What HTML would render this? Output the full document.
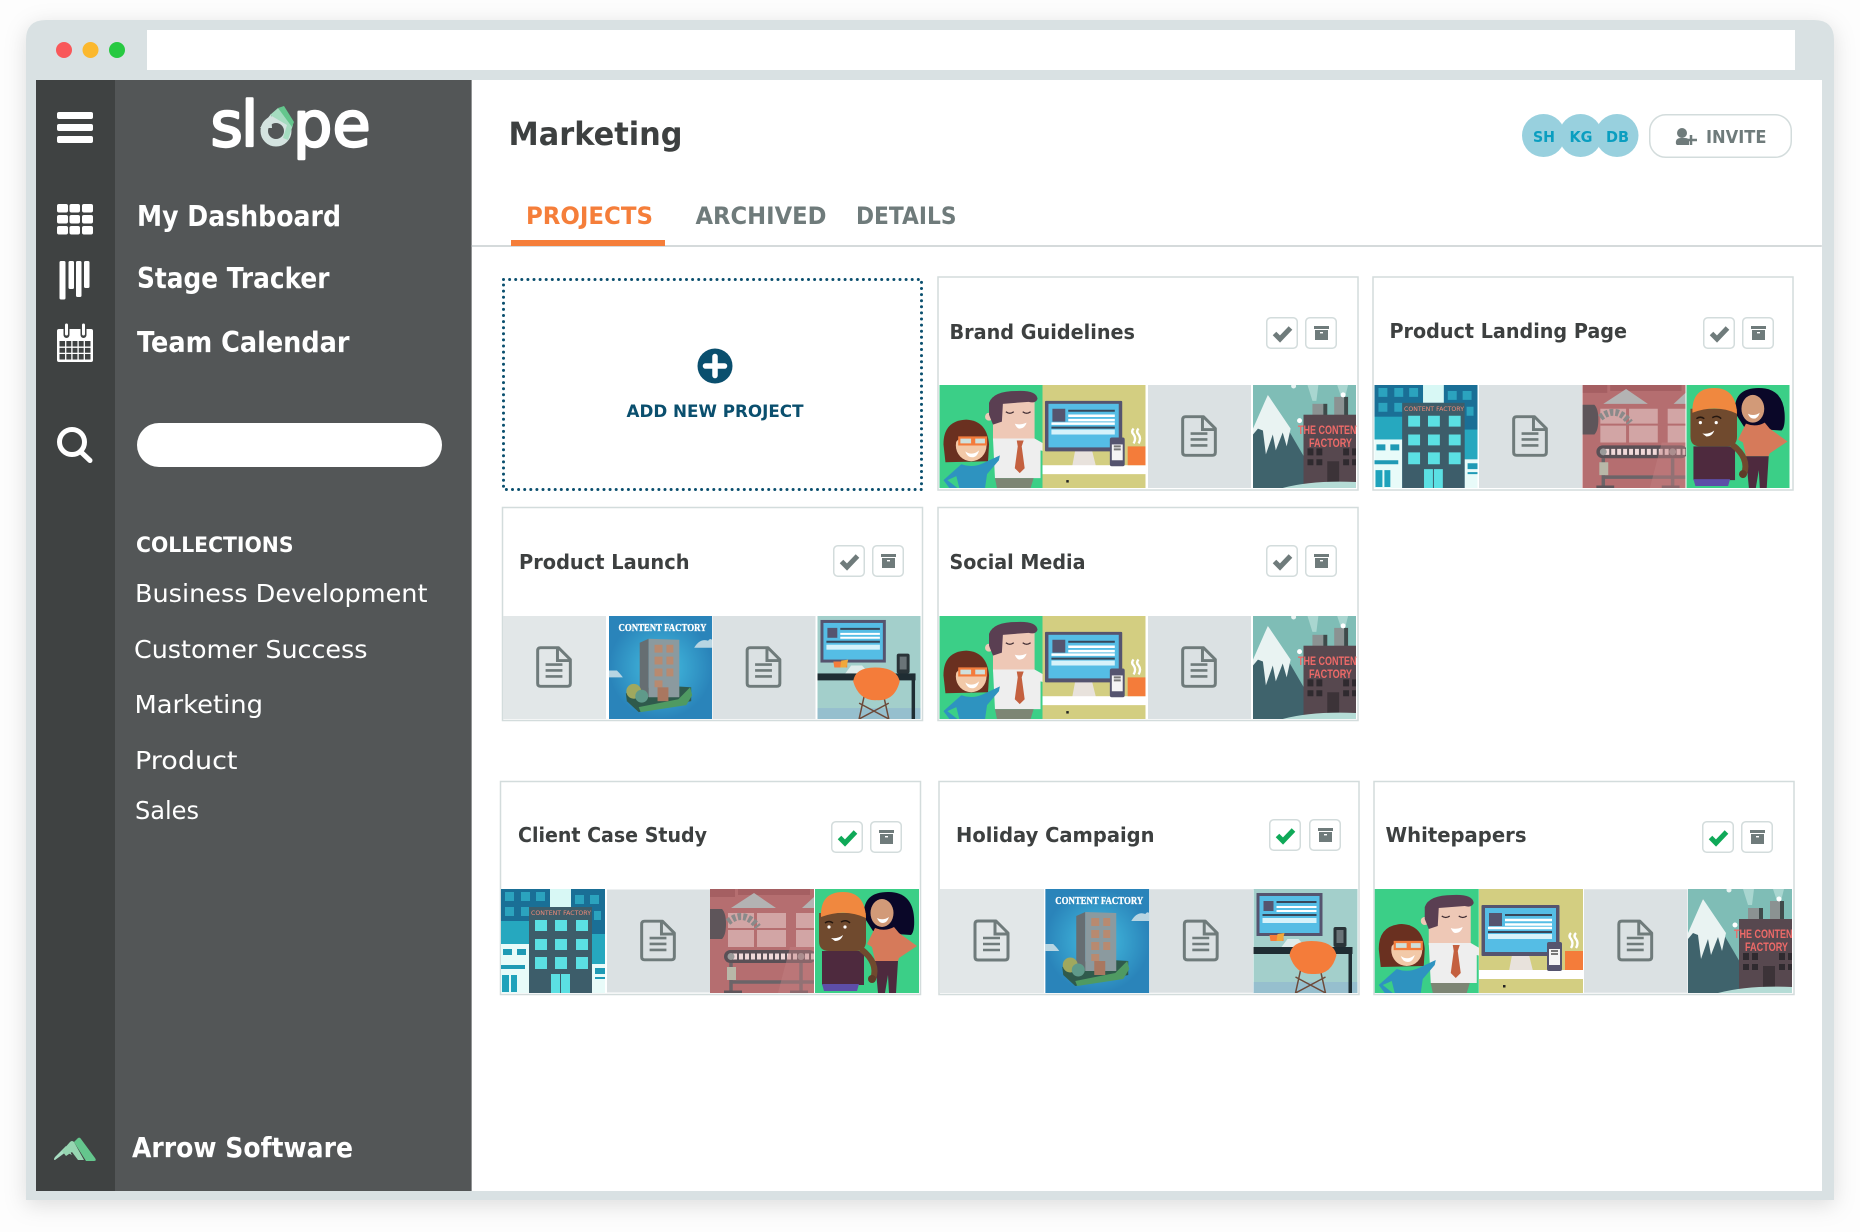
<!DOCTYPE html>
<html><head><meta charset="utf-8"><title>Slope - Marketing</title>
<style>
html,body{margin:0;padding:0;background:#fdfdfd;width:1860px;height:1232px;overflow:hidden}
svg{display:block}
text{font-family:"DejaVu Sans","Liberation Sans",sans-serif}
.b{font-weight:700}
.t{font-weight:700;font-size:20.5px;fill:#3d4040}
.w{fill:#fff}
.tab{font-weight:700;font-size:24px;fill:#6f7b7b}
.nav{font-weight:700;font-size:28.5px;fill:#fff}
.col{font-size:25px;fill:#fff}
.cf{font-family:"Liberation Sans",sans-serif;font-weight:700;fill:#ee6a68;font-size:12px}
.cb{font-family:"Liberation Serif",serif;font-weight:700;fill:#fff;font-size:10px;stroke:#fff;stroke-width:.3px}
.cc{fill:#f08a78;font-size:6.5px}
.lg{font-size:62px;fill:#fff;stroke:#fff;stroke-width:2.4px;stroke-linejoin:round}
</style></head><body>
<svg width="1860" height="1232" viewBox="0 0 1860 1232" xmlns="http://www.w3.org/2000/svg">
<defs>
<radialGradient id="bg"><stop offset="0" stop-color="#45c0e2"/><stop offset="1" stop-color="#2a84ba"/></radialGradient>

<symbol id="chk" viewBox="0 0 32 32"><rect x=".75" y=".75" width="30.5" height="30.5" rx="4" fill="#fff" stroke="#d3dcdc" stroke-width="1.5"/><path d="M8.500 16.500 L14 22 L24.500 11" fill="none" stroke="#6f7b7b" stroke-width="5"/></symbol>
<symbol id="chkg" viewBox="0 0 32 32"><rect x=".75" y=".75" width="30.5" height="30.5" rx="4" fill="#fff" stroke="#d3dcdc" stroke-width="1.5"/><path d="M8.500 16.500 L14 22 L24.500 11" fill="none" stroke="#0fa958" stroke-width="5"/></symbol>
<symbol id="arc" viewBox="0 0 32 32"><rect x=".75" y=".75" width="30.5" height="30.5" rx="4" fill="#fff" stroke="#d3dcdc" stroke-width="1.5"/><rect x="9" y="9" width="15" height="3" fill="#6f7b7b"/><rect x="10" y="13" width="13" height="10" fill="#6f7b7b"/><rect x="15" y="15" width="3" height="1.4" fill="#fff"/></symbol>

<symbol id="doc" viewBox="0 0 104 104"><rect width="104" height="104" fill="#dbe1e3"/><path d="M38 32H56L68 44V68Q68 71 65 71H38Q35 71 35 68V35Q35 32 38 32Z" fill="none" stroke="#6f7b7b" stroke-width="3" stroke-linejoin="round"/><path d="M55 32V45H68" fill="none" stroke="#6f7b7b" stroke-width="3"/><path d="M43 49H60M43 55H60M43 61H60" stroke="#6f7b7b" stroke-width="2.6"/></symbol>
<symbol id="doc2" viewBox="0 0 104 104"><rect width="104" height="104" fill="#e2e7e8"/><path d="M38 32H56L68 44V68Q68 71 65 71H38Q35 71 35 68V35Q35 32 38 32Z" fill="none" stroke="#6f7b7b" stroke-width="3" stroke-linejoin="round"/><path d="M55 32V45H68" fill="none" stroke="#6f7b7b" stroke-width="3"/><path d="M43 49H60M43 55H60M43 61H60" stroke="#6f7b7b" stroke-width="2.6"/></symbol>

<symbol id="couple" viewBox="0 0 104 104"><rect width="104" height="104" fill="#3bcf87"/>
<path d="M54 12H96V56H54Z" fill="#eec8b6"/>
<path d="M54 54H96L110 62V68L102 66V94H56Z" fill="#eeeeee"/>
<path d="M78 56H85L83 62L86 84L81 89L76 84L79 62Z" fill="#c4603f"/>
<path d="M56 94H95L92 104H58Z" fill="#7d8574"/>
<circle cx="50" cy="32" r="4" fill="#eec8b6"/>
<path d="M50 18Q54 6 78 6Q98 5 99 14Q97 19 90 17L64 19L63 37L54 40L50 30Z" fill="#5a3f52"/>
<path d="M67 27Q71 30 75 27M84 27Q88 30 92 27" fill="none" stroke="#3d2a30" stroke-width="1.200"/>
<path d="M76 39Q81 41 88 38Q86 44 81 44Q78 44 76 39Z" fill="#fff"/>
<path d="M4 60Q4 36 27 35Q48 36 50 60L49 77L6 78Z" fill="#6a3020"/>
<ellipse cx="32" cy="61" rx="15.500" ry="16" fill="#f2c9a8"/>
<path d="M17 46Q30 38 44 46L47 53L22 52L16 58Z" fill="#6a3020"/>
<path d="M20 53H33V60H20ZM35 53H47V60H35Z" fill="#cfe0dc" stroke="#f47c3c" stroke-width="2.200"/>
<path d="M26 67Q33 72 40 66Q38 73 33 73Q28 73 26 67Z" fill="#fff"/>
<path d="M22 80Q33 84 44 79L61 71L60 76L48 90L46 104H20L17 92L8 96L18 104H10L4 96Z" fill="#2e93c0"/>
</symbol>

<symbol id="monitor" viewBox="0 0 104 104"><rect width="104" height="104" fill="#d3ce81"/>
<path d="M33 66H50L54 82H30Z" fill="#e8e2dc"/>
<rect y="81" width="104" height="9" fill="#fff"/>
<rect x="2.500" y="16" width="78" height="51" rx="1" fill="#55546f"/>
<rect x="6" y="19" width="71" height="44" fill="#55bde5"/>
<rect x="10" y="24" width="13" height="13" fill="#55546f"/>
<path d="M26 26H73M9 43H73" stroke="#37475a" stroke-width="2"/>
<path d="M26 31H73M26 35.500H73M9 39H73" stroke="#fff" stroke-width="2.500"/>
<rect x="9" y="45" width="64" height="5" fill="#d6f2fa"/>
<rect x="68" y="53" width="15" height="29" rx="2" fill="#55546f"/>
<rect x="70" y="60" width="11" height="16" fill="#f4f4f4"/>
<path d="M72 62H79M72 65H79" stroke="#777" stroke-width="2"/>
<rect x="86" y="62" width="18" height="19" fill="#f47c3a"/>
<path d="M92 44Q89 47 92 50Q95 54 92 59M97 44Q94 47 97 50Q100 54 97 59" fill="none" stroke="#fff" stroke-width="2.400"/>
<rect x="24" y="96" width="2.500" height="2.500" fill="#222"/>
</symbol>

<symbol id="mountain" viewBox="0 0 104 104"><rect width="104" height="104" fill="#7fbdb6"/>
<path d="M55 0L60 16H64L66 0ZM85 0L89 12H93L96 0Z" fill="#a9d6d0"/>
<path d="M15 10L0 49V104H56V80Z" fill="#3f636c"/>
<path d="M15 10L0 44V50L5 44L10 46L13 70L20 50L23 66L30 48L34 62L38 44Z" fill="#e9f3f2"/>
<rect x="60" y="19" width="11" height="12" fill="#8b9292"/><rect x="71" y="19" width="4" height="12" fill="#3f4a4a"/>
<rect x="82" y="12" width="10" height="19" fill="#8b9292"/><rect x="92" y="12" width="4" height="19" fill="#3f4a4a"/>
<rect x="51" y="30" width="53" height="74" fill="#57484f"/>
<path d="M55 64H61V71H55ZM64 64H70V71H64ZM55 75H61V81H55ZM64 75H70V81H64ZM91 64H97V71H91ZM100 64H104V71H100ZM91 75H97V81H91ZM100 75H104V81H100Z" fill="#2f2a2f"/>
<rect x="75" y="77" width="12" height="22" fill="#3c3338"/>
<path d="M30 104Q60 96 104 98V104Z" fill="#b5dcd6"/>
<circle cx="41" cy="1" r="2.500" fill="#e9f3f2"/><circle cx="91" cy="10" r="2.500" fill="#fff"/><circle cx="47" cy="36" r="2.500" fill="#fff"/>
</symbol>

<symbol id="city" viewBox="0 0 104 104"><rect width="104" height="104" fill="#1a6f96"/>
<path d="M4 3H13V12H4ZM20 3H29V12H20ZM35 3H44V12H35ZM4 18H13V27H4ZM20 18H28V27H20ZM74 6H83V15H74ZM89 6H98V15H89ZM93 22H100V31H93Z" fill="#2ba3be"/>
<rect x="49" width="21" height="18" fill="#d8f8f5"/>
<rect y="32" width="28" height="24" fill="#26a8bf"/>
<rect x="91" y="45" width="13" height="30" fill="#26a8bf"/>
<rect y="55" width="28" height="49" fill="#e8fbf9"/>
<path d="M2 60H11V66H2ZM16 60H25V66H16ZM0 76H24V80H0Z" fill="#1f9ab5"/>
<path d="M1 86H8V103H1ZM10 86H16V103H10Z" fill="#1fa2bb"/>
<rect x="91" y="75" width="13" height="29" fill="#e8fbf9"/>
<path d="M94 79H104V85H94ZM94 88H104V90H94Z" fill="#1f9ab5"/>
<rect x="28" y="18" width="63" height="86" fill="#3d5d6a"/>
<path d="M34 31H46V42H34ZM54 31H66V42H54ZM75 31H87V42H75ZM34 50H46V61H34ZM54 50H66V61H54ZM75 50H87V61H75ZM34 68H46V80H34ZM54 68H66V80H54ZM75 68H87V80H75ZM50 85H59V104H50ZM60 85H69V104H60Z" fill="#5be0e3"/>
</symbol>

<symbol id="conveyor" viewBox="0 0 104 104"><rect width="104" height="104" fill="#b56e70"/>
<path d="M18 24H44V58H18ZM47 24H76V58H47ZM86 24H104V58H86Z" fill="#d2a5a5"/>
<path d="M18 40H104" stroke="#b56e70" stroke-width="2"/>
<path d="M0 0H25V8H0ZM28 0H100V6H28Z" fill="#a55f62"/>
<path d="M44 4L21 19H66Z" fill="#b3b3b3"/>
<path d="M92 19L104 8V19Z" fill="#b3b3b3"/>
<path d="M0 20H12Q16 24 16 35Q16 46 12 50H0Z" fill="#5e555a"/>
<path d="M18 33Q34 20 48 38" fill="none" stroke="#8a8a8a" stroke-width="7" stroke-dasharray="3.500 2"/>
<rect x="14" y="61" width="92" height="13" rx="6.500" fill="#5a5056"/>
<path d="M23 67.500H104" stroke="#f0d9d9" stroke-width="6" stroke-dasharray="4 2"/>
<circle cx="21" cy="67.500" r="3.500" fill="#9a9a9a"/><circle cx="91" cy="67.500" r="3.500" fill="#9a9a9a"/>
<path d="M21 74V102M91 74V102M22 93H104" stroke="#6b6468" stroke-width="3.500"/>
<rect x="17" y="78" width="9" height="13" fill="#b8b8a8"/>
<path d="M14 103H32M80 103H98" stroke="#5e555a" stroke-width="3"/>
<path d="M68 104L80 58H104V104Z" fill="#c48082" opacity=".45"/>
</symbol>

<symbol id="workers" viewBox="0 0 104 104"><rect width="104" height="104" fill="#3bcf87"/>
<path d="M49 28Q47 3 73 3Q97 3 99 28Q100 42 96 46L66 44L58 42Z" fill="#0a0728"/>
<ellipse cx="67" cy="24" rx="11.500" ry="14" fill="#d29a78"/>
<path d="M60 39Q70 43 79 38L84 44L102 57L84 69L83 72H60L57 58L52 55Z" fill="#d67a5a"/>
<path d="M60 72H83L81 104H74L73 86L70 104H63Z" fill="#4e2a3e"/>
<path d="M62 29Q68 32 74 28Q72 34 68 34Q64 34 62 29Z" fill="#fff"/>
<path d="M7 62H49V96H7Z" fill="#4e2a3e"/>
<path d="M7 95H44L42 102H9Z" fill="#5d4ea8"/>
<path d="M46 60Q64 74 58 90" fill="none" stroke="#704a2e" stroke-width="6"/>
<circle cx="57" cy="90" r="4" fill="#5e3c28"/>
<path d="M4 24H51V52Q51 62 41 62H14Q4 62 4 52Z" fill="#704a2e"/>
<path d="M6 28Q5 3 28 3Q50 3 51 29Q30 19 6 28Z" fill="#f0883f"/>
<path d="M10 34Q14 31 18 34M26 33Q31 30 35 34" fill="none" stroke="#241710" stroke-width="1.500"/>
<circle cx="14" cy="38" r="1.600" fill="#fff"/><circle cx="30" cy="38" r="1.600" fill="#fff"/>
<path d="M16 49Q23 50 28 46Q26 52 20 52Z" fill="#fff"/>
</symbol>

<symbol id="blue" viewBox="0 0 104 104"><rect width="104" height="104" fill="url(#bg)"/>
<path d="M86 32Q92 22 100 25Q102 22 104 24V32Z" fill="#b8d5e2"/>
<path d="M0 55H8Q12 59 14 62H0Z" fill="#b8d5e2"/>
<path d="M17 78L50 70L83 72V86L30 97L18 86Z" fill="#2f5a4c"/>
<path d="M30 92L70 84L82 72L84 80L78 90L32 97Z" fill="#4f9a62"/>
<path d="M31 27L40 23V82L31 75Z" fill="#666e72"/>
<path d="M40 23L71 24V82L40 82Z" fill="#8b9a9f"/>
<path d="M46 29H54V37H46ZM58 29H65V37H58ZM46 41H54V49H46ZM58 41H65V49H58ZM46 53H54V61H46ZM58 53H65V61H58ZM46 65H54V72H46Z" fill="#b88a70"/>
<rect x="49" y="72" width="11" height="14" fill="#a97760"/>
<circle cx="25" cy="76" r="7.500" fill="#a0a85e"/><circle cx="33" cy="81" r="6.500" fill="#5f9a8a"/>
</symbol>

<symbol id="desk" viewBox="0 0 104 104"><rect width="104" height="104" fill="#a3cfcb"/>
<rect y="93" width="104" height="11" fill="#96bfce"/>
<rect x="3" y="4" width="66" height="43" fill="#55546f"/>
<rect x="6" y="7" width="60" height="37" fill="#55bde5"/>
<rect x="10" y="12" width="10" height="10" fill="#55546f"/>
<path d="M23 13H63M9 26H63" stroke="#37475a" stroke-width="2"/>
<path d="M23 18H63M23 22H63" stroke="#fff" stroke-width="2"/>
<rect x="9" y="29" width="54" height="5" fill="#d6f2fa"/>
<path d="M16 46H30V52H17Z" fill="#f47c3a"/><path d="M24 45L31 44L29 52L23 52Z" fill="#f0a83a"/>
<rect x="80" y="38" width="13" height="20" rx="2" fill="#2a3438"/><rect x="83" y="41" width="7" height="13" fill="#6a7478"/>
<path d="M28 58L34 50H45L52 58Z" fill="#dfeceb"/>
<rect y="58" width="99" height="7" fill="#1f2d33"/>
<rect x="95" y="58" width="3.500" height="46" fill="#1f2d33"/>
<path d="M50 68L42 104M64 68L72 104M42 104L72 88M72 104L42 88" fill="none" stroke="#6d4a3a" stroke-width="1.500"/>
<path d="M36 66Q38 52 58 52Q80 52 83 66Q78 86 60 85Q42 86 36 66Z" fill="#f47c3a"/>
</symbol>
</defs>

<rect width="1860" height="1232" fill="#fdfdfd"/>
<path d="M46 20H1814Q1834 20 1834 40V1200H26V40Q26 20 46 20Z" fill="#d9e1e3" style="filter:drop-shadow(0 5px 11px rgba(0,0,0,.13))"/>
<circle cx="64" cy="50" r="8" fill="#f9585a"/><circle cx="90.500" cy="50" r="8" fill="#fbb82e"/><circle cx="117" cy="50" r="8" fill="#27c941"/>
<rect x="147" y="30" width="1648" height="40" fill="#fff"/>

<rect x="36" y="80" width="1786" height="1111" fill="#fff"/>
<rect x="115" y="80" width="356" height="1111" fill="#535657"/>
<rect x="471" y="80" width=".8" height="1111" fill="#777a7b"/>
<rect x="36" y="80" width="79" height="1111" fill="#3f4242"/>

<!-- rail icons -->
<g fill="#fff"><rect x="57" y="112" width="36" height="7" rx="2"/><rect x="57" y="124" width="36" height="7" rx="2"/><rect x="57" y="136" width="36" height="7" rx="2"/></g>
<g fill="#fff"><rect x="57" y="204" width="11" height="8.500" rx="2"/><rect x="69.500" y="204" width="10.500" height="8.500" rx="2"/><rect x="82" y="204" width="11" height="8.500" rx="2"/>
<rect x="57" y="215" width="11" height="8.500" rx="2"/><rect x="69.500" y="215" width="10.500" height="8.500" rx="2"/><rect x="82" y="215" width="11" height="8.500" rx="2"/>
<rect x="57" y="226" width="11" height="8.500" rx="2"/><rect x="69.500" y="226" width="10.500" height="8.500" rx="2"/><rect x="82" y="226" width="11" height="8.500" rx="2"/>
<rect x="59.500" y="261" width="6" height="38.500" rx="1.500"/><rect x="68.500" y="261" width="5.500" height="28" rx="1.500"/><rect x="76" y="261" width="5.500" height="36" rx="1.500"/><rect x="84" y="261" width="5.500" height="27" rx="1.500"/></g>
<path d="M59 329H91Q93 329 93 331V360Q93 362 91 362H59Q57 362 57 360V331Q57 329 59 329Z" fill="#fff"/>
<rect x="59.500" y="341" width="31" height="18.500" fill="#3f4242"/>
<path d="M59.500 347.200H90.500M59.500 353.400H90.500M65.700 341V359.500M71.900 341V359.500M78.100 341V359.500M84.300 341V359.500" stroke="#fff" stroke-width="1.300"/>
<path d="M66.500 325V335M83.500 325V335" stroke="#3f4242" stroke-width="6" stroke-linecap="round"/>
<path d="M66.500 325V334M83.500 325V334" stroke="#fff" stroke-width="3" stroke-linecap="round"/>
<circle cx="72" cy="442" r="12.500" fill="none" stroke="#fff" stroke-width="5"/>
<path d="M81 452L90 460.500" stroke="#fff" stroke-width="5" stroke-linecap="round"/>
<path d="M55 1160Q53 1160 55 1157L66 1146L72 1155L66 1152Z" fill="#a8dec3"/>
<path d="M62 1151L70 1142Q72 1140 74 1142L84 1160H78L72 1152L66 1156Z" fill="#96d6b1"/>
<path d="M74 1142L78 1138Q80 1137 81 1139L95 1158Q97 1161 94 1161H86Z" fill="#64c68d"/>

<!-- logo -->
<text x="210.500" y="146" class="lg">s</text>
<text x="241" y="146" class="lg">l</text>
<text x="293" y="146" class="lg">p</text>
<text x="332.500" y="146" class="lg">e</text>
<circle cx="276" cy="131" r="11.750" fill="none" stroke="#d4e3e0" stroke-width="7.500"/>
<path d="M260 128L271 114L272 128Z" fill="#d4e3e0"/>
<path d="M270 115L278 108L293 125L288 140L283 138L287 125Z" fill="#a5dcc0"/>
<path d="M278 108L284 106L294 122L292 127Z" fill="#64c68d"/>

<!-- sidebar text -->
<text x="137" y="226" class="nav" textLength="204" lengthAdjust="spacingAndGlyphs">My Dashboard</text>
<text x="137" y="288" class="nav" textLength="192.500" lengthAdjust="spacingAndGlyphs">Stage Tracker</text>
<text x="137" y="352" class="nav" textLength="212.500" lengthAdjust="spacingAndGlyphs">Team Calendar</text>
<rect x="137" y="423" width="305" height="44" rx="22" fill="#fff"/>
<text x="136" y="552" class="b w" font-size="21" textLength="157.500" lengthAdjust="spacingAndGlyphs">COLLECTIONS</text>
<text x="135" y="602" class="col" textLength="292.500" lengthAdjust="spacingAndGlyphs">Business Development</text>
<text x="134" y="658" class="col" textLength="233.500" lengthAdjust="spacingAndGlyphs">Customer Success</text>
<text x="134.500" y="713" class="col" textLength="128.500" lengthAdjust="spacingAndGlyphs">Marketing</text>
<text x="135" y="769" class="col" textLength="102.500" lengthAdjust="spacingAndGlyphs">Product</text>
<text x="135" y="819" class="col" textLength="64" lengthAdjust="spacingAndGlyphs">Sales</text>
<text x="132" y="1157" class="b w" font-size="27.500" textLength="221" lengthAdjust="spacingAndGlyphs">Arrow Software</text>

<!-- header -->
<text x="508.500" y="145" class="b" font-size="32" fill="#3d4040" textLength="174" lengthAdjust="spacingAndGlyphs">Marketing</text>
<rect x="471.800" y="245" width="1350" height="2" fill="#d5dadb"/>
<text x="526" y="224" class="tab" style="fill:#f57e3a" textLength="127" lengthAdjust="spacingAndGlyphs">PROJECTS</text>
<text x="695.500" y="224" class="tab" textLength="131" lengthAdjust="spacingAndGlyphs">ARCHIVED</text>
<text x="856" y="224" class="tab" textLength="100.500" lengthAdjust="spacingAndGlyphs">DETAILS</text>
<rect x="511" y="240" width="154" height="6" fill="#f57e3a"/>

<circle cx="1543.500" cy="135.500" r="21.500" fill="#98d0de"/><circle cx="1580.500" cy="135.500" r="21.500" fill="#98d0de"/><circle cx="1617" cy="135.500" r="21.500" fill="#98d0de"/>
<text x="1533" y="142" class="b" font-size="15" fill="#0a9ec0" textLength="22" lengthAdjust="spacingAndGlyphs">SH</text>
<text x="1569.500" y="142" class="b" font-size="15" fill="#0a9ec0" textLength="23" lengthAdjust="spacingAndGlyphs">KG</text>
<text x="1606" y="142" class="b" font-size="15" fill="#0a9ec0" textLength="23" lengthAdjust="spacingAndGlyphs">DB</text>
<rect x="1649.750" y="114.750" width="141.500" height="42.500" rx="16" fill="#fff" stroke="#d3dcdc" stroke-width="1.500"/>
<circle cx="1682" cy="133" r="5" fill="#6f7b7b"/>
<path d="M1676 144Q1675 138 1681 138H1685Q1688 138 1689 140V145H1677Z" fill="#6f7b7b"/>
<path d="M1691 135V145M1686 140H1697" stroke="#6f7b7b" stroke-width="2.500"/>
<text x="1706" y="143" class="b" font-size="17.500" fill="#6f7b7b" textLength="60.500" lengthAdjust="spacingAndGlyphs">INVITE</text>

<!-- add new -->
<rect x="503.500" y="279.500" width="418" height="210" fill="#fff" stroke="#0a4f6e" stroke-width="3" stroke-dasharray="0 6.100" stroke-linecap="round"/>
<circle cx="715" cy="366" r="17.500" fill="#0a4f6e"/>
<path d="M705.500 366H724.500M715 356.500V375.500" stroke="#fff" stroke-width="5.500" stroke-linecap="round"/>
<text x="626.500" y="417" class="b" font-size="16.500" fill="#0a4f6e" textLength="177" lengthAdjust="spacingAndGlyphs">ADD NEW PROJECT</text>

<!-- Brand Guidelines -->
<rect x="938" y="277" width="420" height="213" fill="#fff" stroke="#d3dcdc" stroke-width="1.500"/>
<text x="949.500" y="339" class="t" textLength="185.500" lengthAdjust="spacingAndGlyphs">Brand Guidelines</text>
<use href="#chk" x="1266" y="317" width="32" height="32"/><use href="#arc" x="1305" y="317" width="32" height="32"/>
<use href="#couple" x="939" y="385" width="104" height="103"/><use href="#monitor" x="1042" y="385" width="104" height="103"/><use href="#doc" x="1148" y="385" width="103" height="103"/>
<svg x="1252" y="385" width="105" height="103" viewBox="0 0 105 103"><use href="#mountain" width="105" height="103"/><text x="46" y="49" class="cf" textLength="64" lengthAdjust="spacingAndGlyphs">THE CONTENT</text><text x="57" y="62" class="cf" textLength="43" lengthAdjust="spacingAndGlyphs">FACTORY</text></svg>

<!-- Product Landing Page -->
<rect x="1373" y="277" width="420" height="213" fill="#fff" stroke="#d3dcdc" stroke-width="1.500"/>
<text x="1389.500" y="338" class="t" textLength="237.500" lengthAdjust="spacingAndGlyphs">Product Landing Page</text>
<use href="#chk" x="1703" y="317" width="32" height="32"/><use href="#arc" x="1742" y="317" width="32" height="32"/>
<svg x="1374" y="385" width="104" height="103" viewBox="0 0 104 103"><use href="#city" width="104" height="103"/><text x="30" y="26" class="cc" textLength="60" lengthAdjust="spacingAndGlyphs">CONTENT FACTORY</text></svg>
<use href="#doc" x="1479" y="385" width="103" height="103"/><use href="#conveyor" x="1582" y="385" width="104" height="103"/><use href="#workers" x="1686" y="385" width="104" height="103"/>

<!-- Product Launch -->
<rect x="502.500" y="507.500" width="420" height="213" fill="#fff" stroke="#d3dcdc" stroke-width="1.500"/>
<text x="519" y="569" class="t" textLength="170.500" lengthAdjust="spacingAndGlyphs">Product Launch</text>
<use href="#chk" x="833" y="545" width="32" height="32"/><use href="#arc" x="872" y="545" width="32" height="32"/>
<use href="#doc2" x="503" y="616" width="103" height="103"/>
<svg x="608.500" y="616" width="104" height="103" viewBox="0 0 104 103"><use href="#blue" width="104" height="103"/><text x="10" y="15" class="cb" textLength="88" lengthAdjust="spacingAndGlyphs">CONTENT FACTORY</text></svg>
<use href="#doc" x="712.500" y="616" width="103" height="103"/><use href="#desk" x="817" y="616" width="104" height="103"/>

<!-- Social Media -->
<rect x="938" y="507.500" width="420" height="213" fill="#fff" stroke="#d3dcdc" stroke-width="1.500"/>
<text x="949.500" y="569" class="t" textLength="136" lengthAdjust="spacingAndGlyphs">Social Media</text>
<use href="#chk" x="1266" y="545" width="32" height="32"/><use href="#arc" x="1305" y="545" width="32" height="32"/>
<use href="#couple" x="939" y="616" width="104" height="103"/><use href="#monitor" x="1042" y="616" width="104" height="103"/><use href="#doc" x="1148" y="616" width="103" height="103"/>
<svg x="1252" y="616" width="105" height="103" viewBox="0 0 105 103"><use href="#mountain" width="105" height="103"/><text x="46" y="49" class="cf" textLength="64" lengthAdjust="spacingAndGlyphs">THE CONTENT</text><text x="57" y="62" class="cf" textLength="43" lengthAdjust="spacingAndGlyphs">FACTORY</text></svg>

<!-- Client Case Study -->
<rect x="500.500" y="781.500" width="420" height="213" fill="#fff" stroke="#d3dcdc" stroke-width="1.500"/>
<text x="518" y="842" class="t" textLength="189" lengthAdjust="spacingAndGlyphs">Client Case Study</text>
<use href="#chkg" x="831" y="821" width="32" height="32"/><use href="#arc" x="870" y="821" width="32" height="32"/>
<svg x="501" y="889" width="104" height="104" viewBox="0 0 104 104"><use href="#city" width="104" height="104"/><text x="30" y="26" class="cc" textLength="60" lengthAdjust="spacingAndGlyphs">CONTENT FACTORY</text></svg>
<use href="#doc" x="607" y="889" width="103" height="104"/><use href="#conveyor" x="710" y="889" width="104" height="104"/><use href="#workers" x="815" y="889" width="104" height="104"/>

<!-- Holiday Campaign -->
<rect x="939" y="781.500" width="420" height="213" fill="#fff" stroke="#d3dcdc" stroke-width="1.500"/>
<text x="956" y="842" class="t" textLength="198.500" lengthAdjust="spacingAndGlyphs">Holiday Campaign</text>
<use href="#chkg" x="1269" y="819" width="32" height="32"/><use href="#arc" x="1309" y="819" width="32" height="32"/>
<use href="#doc2" x="940" y="889" width="104" height="104"/>
<svg x="1045" y="889" width="104.500" height="104" viewBox="0 0 104 104"><use href="#blue" width="104" height="104"/><text x="10" y="15" class="cb" textLength="88" lengthAdjust="spacingAndGlyphs">CONTENT FACTORY</text></svg>
<use href="#doc" x="1149.500" y="889" width="103.500" height="104"/><use href="#desk" x="1253.500" y="889" width="104" height="104"/>

<!-- Whitepapers -->
<rect x="1374" y="781.500" width="420" height="213" fill="#fff" stroke="#d3dcdc" stroke-width="1.500"/>
<text x="1385.500" y="842" class="t" textLength="141" lengthAdjust="spacingAndGlyphs">Whitepapers</text>
<use href="#chkg" x="1702" y="821" width="32" height="32"/><use href="#arc" x="1741" y="821" width="32" height="32"/>
<use href="#couple" x="1374.500" y="889" width="104.500" height="104"/><use href="#monitor" x="1479" y="889" width="104" height="104"/><use href="#doc" x="1584" y="889" width="103.500" height="104"/>
<svg x="1688" y="889" width="104" height="104" viewBox="0 0 104 104"><use href="#mountain" width="104" height="104"/><text x="46" y="49" class="cf" textLength="64" lengthAdjust="spacingAndGlyphs">THE CONTENT</text><text x="57" y="62" class="cf" textLength="43" lengthAdjust="spacingAndGlyphs">FACTORY</text></svg>
</svg>
</body></html>
